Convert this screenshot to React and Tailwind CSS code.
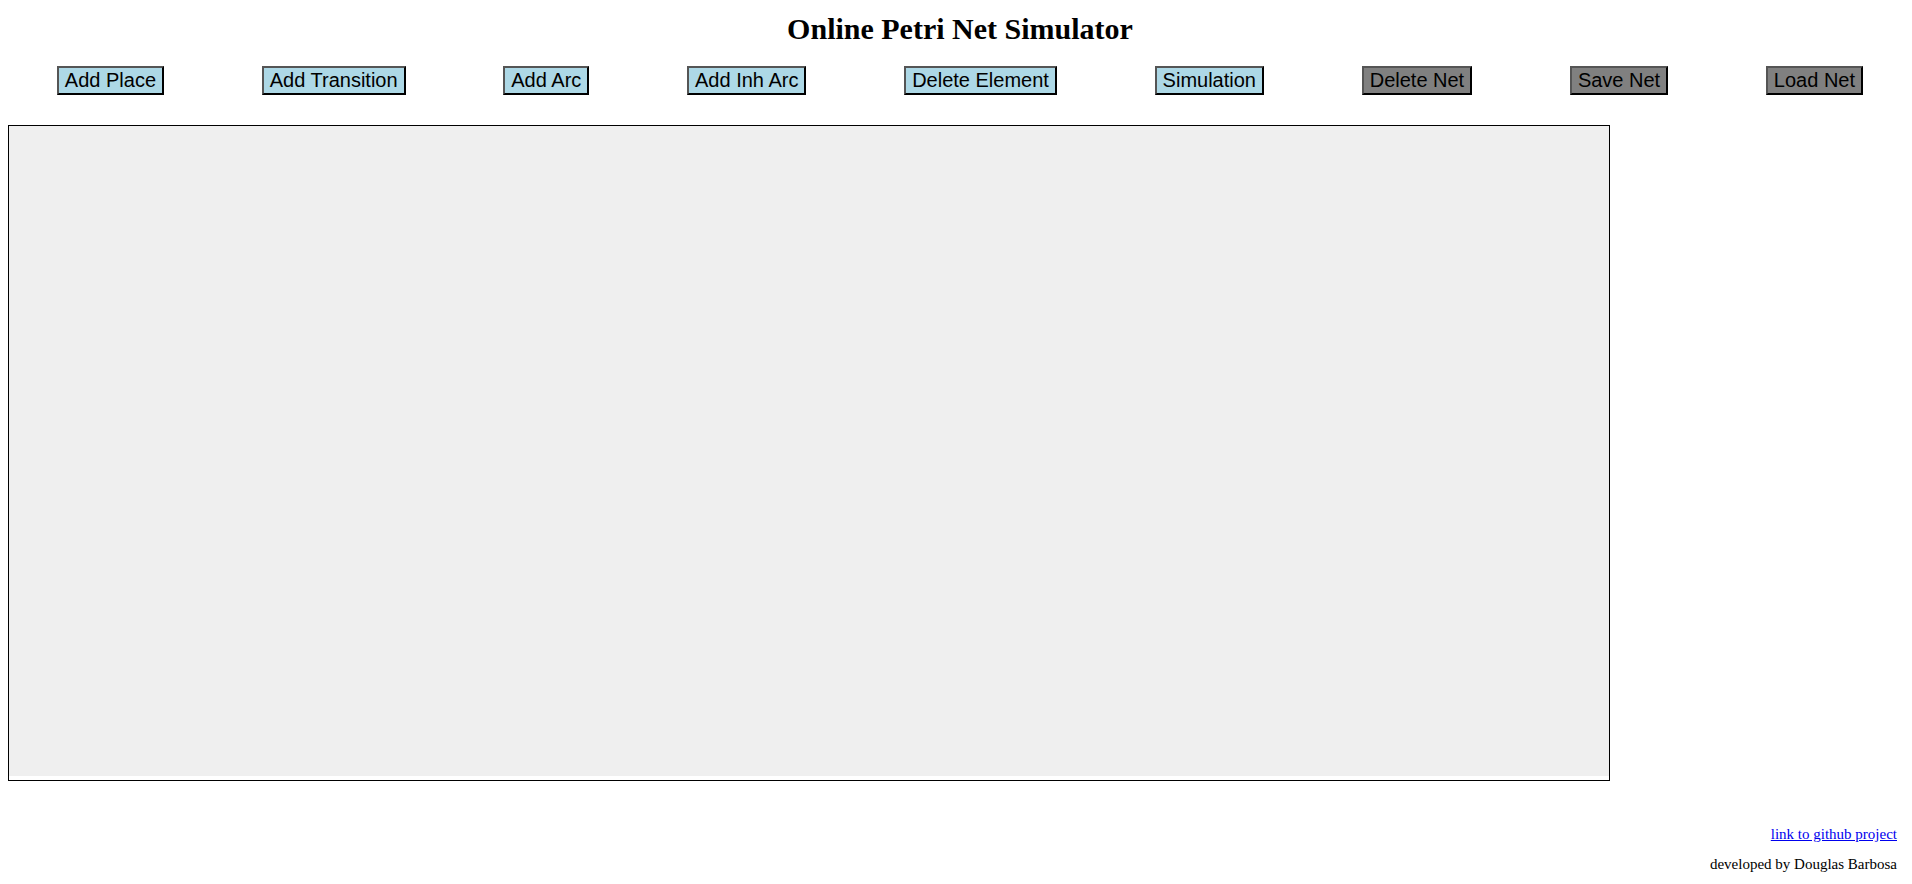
import React from "react";

const blueButtons = ["Add Place", "Add Transition", "Add Arc", "Add Inh Arc", "Delete Element", "Simulation"];
const grayButtons = ["Delete Net", "Save Net", "Load Net"];

function Btn({ label, gray }) {
  return (
    <button
      className={
        "block px-[6px] py-[1px] text-[20px] leading-[23px] text-black font-['Liberation_Sans',Arial,sans-serif] border-2 border-solid border-t-[#555] border-l-[#555] border-b-black border-r-black whitespace-nowrap " +
        (gray ? "bg-[#808080]" : "bg-[#add8e6]")
      }
    >
      {label}
    </button>
  );
}

export default function App() {
  return (
    <div className="w-full pl-2 bg-white text-black font-['Liberation_Serif','Times_New_Roman',serif]">
      <h1 className="pt-[12px] text-center text-[30px] font-bold leading-[33px]">
        Online Petri Net Simulator
      </h1>
      <div className="mt-[21px] flex items-start justify-around">
        {blueButtons.map((b) => (
          <Btn key={b} label={b} />
        ))}
        {grayButtons.map((b) => (
          <Btn key={b} label={b} gray />
        ))}
      </div>
      <div className="mt-[30px] w-[1602px] border border-black">
        <div className="h-[650px] w-[1600px] bg-[#efefef]" />
        <div className="h-[4px]" />
      </div>
      <div className="mt-[45px] pr-[15px] text-right text-[15px] leading-[17px]">
        <a href="#" className="text-[#0000ee] underline">
          link to github project
        </a>
      </div>
      <div className="mt-[13px] pr-[15px] text-right text-[15px] leading-[17px]">
        developed by Douglas Barbosa
      </div>
    </div>
  );
}
